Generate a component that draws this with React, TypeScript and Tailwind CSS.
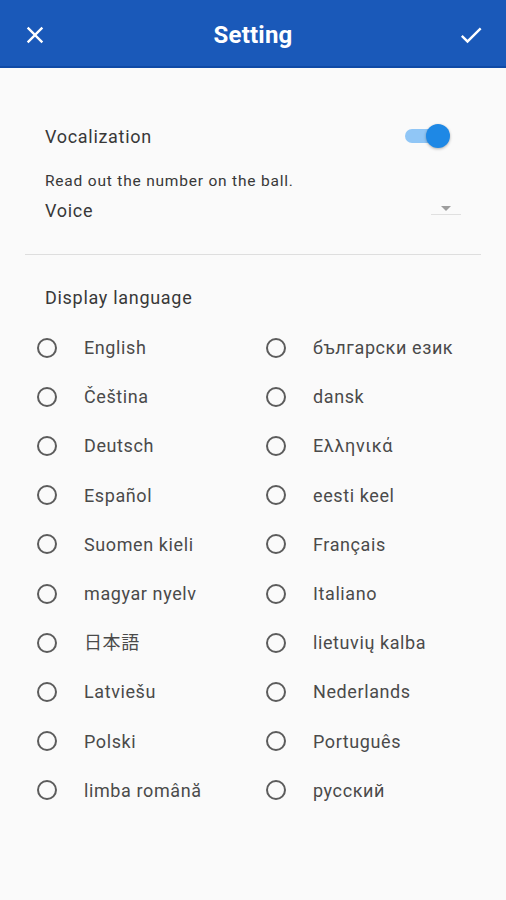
import { useState } from "react";

const LANGUAGES: [string, string][] = [
  ["English", "български език"],
  ["Čeština", "dansk"],
  ["Deutsch", "Ελληνικά"],
  ["Español", "eesti keel"],
  ["Suomen kieli", "Français"],
  ["magyar nyelv", "Italiano"],
  ["日本語", "lietuvių kalba"],
  ["Latviešu", "Nederlands"],
  ["Polski", "Português"],
  ["limba română", "русский"],
];

export default function App() {
  const [voice, setVoice] = useState(true);
  const [lang, setLang] = useState<string | null>(null);

  return (
    <div className="min-h-[900px] w-full bg-[#fafafa] font-['Roboto','Noto_Sans_CJK_JP',sans-serif]">
      <header className="h-[68px] bg-[#1a59b9] border-b-2 border-[#0f4aa6] flex items-center justify-between px-[21px] pt-1">
        <button className="w-7 h-7 flex items-center justify-center text-white">
          <svg viewBox="0 0 24 24" className="w-7 h-7" fill="currentColor">
            <path d="M19 6.41 17.59 5 12 10.59 6.41 5 5 6.41 10.59 12 5 17.59 6.41 19 12 13.41 17.59 19 19 17.59 13.41 12z" />
          </svg>
        </button>
        <h1 className="text-white text-[24px] font-bold tracking-[0.2px]">Setting</h1>
        <button className="w-7 h-7 flex items-center justify-center text-white">
          <svg viewBox="0 0 24 24" className="w-7 h-7" fill="currentColor">
            <path d="M9 16.17 4.83 12l-1.42 1.41L9 19 21 7l-1.41-1.41z" />
          </svg>
        </button>
      </header>

      <main className="px-[25px] pb-10">
        <section className="px-5 pt-12">
          <div className="h-10 flex items-center justify-between">
            <span className="text-[18px] tracking-[0.7px] text-[#383838]">Vocalization</span>
            <button
              onClick={() => setVoice(!voice)}
              className="relative w-[46px] h-6 mr-[11px] flex items-center"
            >
              <span
                className={`block w-[36px] h-[14px] rounded-full ml-[1px] ${
                  voice ? "bg-[#90c6f6]" : "bg-[#bdbdbd]"
                }`}
              />
              <span
                className={`absolute top-0 w-6 h-6 rounded-full shadow-[0_1px_3px_rgba(0,0,0,0.3)] ${
                  voice ? "right-0 bg-[#1e88e5]" : "left-0 bg-[#f1f1f1]"
                }`}
              />
            </button>
          </div>
          <p className="mt-[15px] text-[15.5px] leading-5 tracking-[0.8px] text-[#383838]">
            Read out the number on the ball.
          </p>
          <div className="mt-[7px] h-6 flex items-center justify-between">
            <span className="text-[18px] tracking-[0.7px] text-[#383838]">Voice</span>
            <div className="w-[30px] h-6 flex flex-col items-center justify-end">
              <span className="w-0 h-0 border-x-[5px] border-x-transparent border-t-[5px] border-t-[#9e9e9e] mb-[3px]" />
              <span className="w-full h-px bg-[#e0e0e0] mb-[7px]" />
            </div>
          </div>
        </section>

        <div className="mt-8 border-t border-[#dedede]" />

        <section className="px-5">
          <p className="mt-[31px] text-[18px] leading-6 tracking-[0.7px] text-[#383838]">
            Display language
          </p>
        </section>

        <div className="mt-[13px] ml-[12px] grid grid-cols-[229px_1fr]">
          {LANGUAGES.flatMap((pair) => pair).map((name) => (
            <label
              key={name}
              onClick={() => setLang(name)}
              className="h-[49.2px] flex items-center cursor-pointer"
            >
              <span
                className={`w-5 h-5 rounded-full border-2 flex items-center justify-center ${
                  lang === name ? "border-[#1e88e5]" : "border-[#5c5c5c]"
                }`}
              >
                {lang === name && <span className="w-2.5 h-2.5 rounded-full bg-[#1e88e5]" />}
              </span>
              <span className="ml-[27px] text-[18px] tracking-[0.6px] text-[#4a4a4a]">{name}</span>
            </label>
          ))}
        </div>
      </main>
    </div>
  );
}
